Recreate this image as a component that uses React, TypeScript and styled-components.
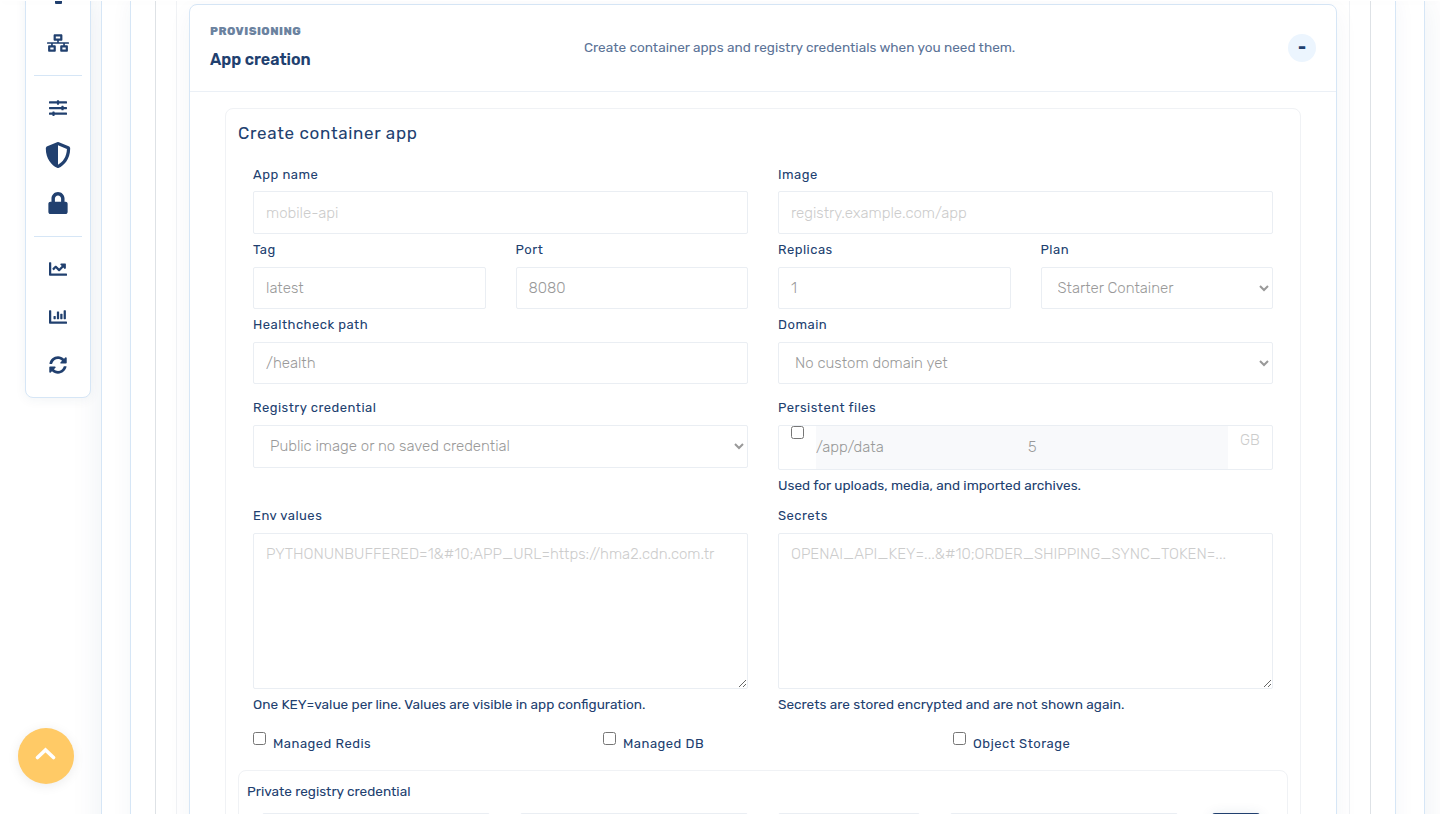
import React from 'react';
import styled, { createGlobalStyle } from 'styled-components';
import {
  FaNetworkWired,
  FaSlidersH,
  FaShieldAlt,
  FaLock,
  FaChartLine,
  FaChartBar,
  FaSyncAlt,
} from 'react-icons/fa';

const navy = '#21406f';

const GlobalStyle = createGlobalStyle`
  * { box-sizing: border-box; }
  body {
    margin: 0;
    overflow: hidden;
    background: #fff;
    color: ${navy};
    font-family: Rubik, Roboto, "Liberation Sans", sans-serif;
  }
  input, select, textarea, button { font-family: inherit; }
`;

const Page = styled.div`
  position: relative;
  height: 814px;
  overflow: hidden;
  padding: 0 15px 0 101px;
`;

const TopBar = styled.div`
  position: absolute;
  top: 0;
  left: 0;
  right: 0;
  height: 1px;
  background: #fff;
  box-shadow: 0 0 10px rgba(0, 0, 0, 0.07);
  z-index: 5;
`;

const Shell = styled.div<{ $line: string; $pad: number; $shadow?: string }>`
  display: flow-root;
  border: solid ${p => p.$line};
  border-width: 0 1px;
  padding: 0 ${p => p.$pad}px;
  background: #fff;
  box-shadow: ${p => p.$shadow || 'none'};
`;

const Rail = styled.nav`
  position: absolute;
  left: 25px;
  top: -10px;
  width: 66px;
  height: 408px;
  padding: 0 8px;
  border: 1px solid #d6e6f6;
  border-radius: 8px;
  background: #fff;
  box-shadow: 0 2px 12px rgba(31, 63, 110, 0.06);
  display: flex;
  flex-direction: column;
  align-items: center;
  color: ${navy};
  z-index: 2;
`;

const RailItem = styled.a<{ $lift?: number }>`
  display: flex;
  align-items: center;
  justify-content: center;
  width: 48px;
  height: 48px;
  padding-bottom: ${p => p.$lift || 0}px;
  flex: none;
`;

const RailStub = styled.span`
  width: 7px;
  height: 13px;
  flex: none;
  border-radius: 0 0 1px 1px;
  background: ${navy};
  margin-bottom: 15px;
`;

const RailLine = styled.div`
  width: 48px;
  height: 1px;
  flex: none;
  background: #d6e6f6;
  margin: 8px 0;
`;

const ToTop = styled.button`
  position: absolute;
  left: 18px;
  top: 728px;
  width: 56px;
  height: 56px;
  border: 0;
  padding: 0 0 5px;
  border-radius: 50%;
  background: #ffca66;
  box-shadow: 0 2px 12px rgba(0, 0, 0, 0.08);
  display: flex;
  align-items: center;
  justify-content: center;
  z-index: 3;
`;

const Card = styled.section`
  margin-top: 4px;
  height: 900px;
  border: 1px solid #d6e6f6;
  border-radius: 8px;
  background: #fff;
  box-shadow: 0 8px 24px rgba(31, 63, 110, 0.05);
`;

const CardHead = styled.header`
  display: grid;
  grid-template-columns: 374px 1fr 28px;
  align-items: center;
  height: 87px;
  padding: 0 20px;
  border-bottom: 1px solid #ebf0f6;
`;

const Heading = styled.div`
  display: flex;
  flex-direction: column;
  gap: 7px;
  height: 50px;
`;

const Eyebrow = styled.span`
  font-size: 11.52px;
  line-height: 16px;
  font-weight: 800;
  letter-spacing: 0.46px;
  color: #6b829f;
`;

const Title = styled.h2`
  margin: 0;
  font-size: 16px;
  line-height: 28px;
  font-weight: 600;
`;

const Lead = styled.span`
  font-size: 13.6px;
  line-height: 20px;
  padding-bottom: 2px;
  color: #5b7397;
`;

const Collapse = styled.button`
  width: 28px;
  height: 28px;
  border: 0;
  padding: 0 0 2px;
  border-radius: 50%;
  background: #ecf5fe;
  color: ${navy};
  font-size: 17px;
  font-weight: 800;
  line-height: 24px;
`;

const FormCard = styled.div`
  margin: 16px 35px 0;
  height: 900px;
  border: 1px solid #f0f2f5;
  border-radius: 8px;
  padding: 12px;
`;

const FormTitle = styled.h3`
  margin: 0 0 20px;
  font-size: 17px;
  line-height: 24px;
  font-weight: 400;
  letter-spacing: 0.68px;
`;

const Grid = styled.div`
  display: grid;
  grid-template-columns: repeat(4, 1fr);
  column-gap: 30px;
  padding: 0 15px;
`;

const Field = styled.div<{ $span?: number; $h: number }>`
  grid-column: span ${p => p.$span || 1};
  height: ${p => p.$h}px;
  display: flex;
  flex-direction: column;
  min-width: 0;
`;

const Label = styled.label<{ $h?: number }>`
  font-size: 13px;
  line-height: 20px;
  height: ${p => p.$h || 27}px;
  flex: none;
  letter-spacing: 0.5px;
`;

const Input = styled.input<{ $h?: number }>`
  width: 100%;
  height: ${p => p.$h || 42}px;
  flex: none;
  padding: 0 12px;
  border: 1px solid #eaeef3;
  border-radius: 2px;
  background: #fff;
  color: #999;
  font-size: 15px;
  font-weight: 300;
  &::placeholder { color: #ccc; opacity: 1; }
`;

const Select = styled.select<{ $h?: number }>`
  width: 100%;
  height: ${p => p.$h || 42}px;
  flex: none;
  padding: 0 12px ${p => (p.$h ? 1 : 0)}px;
  border: 1px solid #eaeef3;
  border-radius: 2px;
  background: #fff;
  color: #999;
  font-size: 15px;
  font-weight: 300;
`;

const Area = styled.textarea`
  width: 100%;
  height: 156px;
  flex: none;
  padding: 9px 12px;
  border: 1px solid #eaeef3;
  border-radius: 2px;
  background: #fff;
  font-size: 15px;
  line-height: 22px;
  font-weight: 300;
  &::placeholder { color: #ccc; opacity: 1; }
`;

const Help = styled.span`
  font-size: 13.6px;
  line-height: 20px;
  margin-top: 5px;
`;

const Volume = styled.div`
  display: flex;
  height: 45px;
  flex: none;
  padding: 0 12px;
  border: 1px solid #eaeef3;
  border-radius: 2px;
`;

const VolumeInput = styled.input<{ $w: number }>`
  width: ${p => p.$w}px;
  height: 43px;
  flex: none;
  border: 0;
  padding: 0 0 1px;
  background: #f8f9fb;
  color: #999;
  font-size: 15px;
  font-weight: 300;
`;

const Unit = styled.span`
  padding-left: 12px;
  color: #ccc;
  font-size: 15px;
  line-height: 28px;
  font-weight: 300;
`;

const Check = styled.input`
  width: 13px;
  height: 13px;
  flex: none;
  margin: 0;
`;

const VolumeCheck = styled(Check)`
  margin-right: 12px;
`;

const Options = styled.div`
  display: grid;
  grid-template-columns: repeat(3, 350px);
  padding: 0 0 0 15px;
  height: 38px;
`;

const Option = styled.label`
  display: flex;
  gap: 7px;
  font-size: 13px;
  letter-spacing: 0.5px;
  span { line-height: 20px; padding-top: 2px; }
`;

const Registry = styled.div`
  height: 200px;
  border: 1px solid #f0f2f5;
  border-radius: 8px;
  padding: 10px 8px;
`;

const RegistryTitle = styled.div`
  font-size: 13.6px;
  line-height: 20px;
`;

const RegistryRow = styled.div`
  display: grid;
  grid-template-columns: 228px 228px 142px 228px 52px;
  column-gap: 30px;
  padding: 12px 0 0 15px;
`;

const Save = styled.button`
  height: 42px;
  margin-left: 4px;
  border: 0;
  border-radius: 3px;
  background: ${navy};
  box-shadow: 0 2px 14px rgba(31, 63, 110, 0.12);
`;

export default function App() {
  return (
    <>
      <GlobalStyle />
      <Page>
        <TopBar />
        <Rail>
          <RailStub />
          <RailItem><FaNetworkWired size={22} /></RailItem>
          <RailLine />
          <RailItem><FaSlidersH size={18} /></RailItem>
          <RailItem $lift={2}><FaShieldAlt size={26} /></RailItem>
          <RailItem $lift={2}><FaLock size={22} /></RailItem>
          <RailLine />
          <RailItem><FaChartLine size={18} /></RailItem>
          <RailItem><FaChartBar size={18} /></RailItem>
          <RailItem><FaSyncAlt size={18} /></RailItem>
        </Rail>
        <ToTop aria-label="Back to top">
          <svg width="22" height="14" viewBox="0 0 22 14" fill="none">
            <path d="M2.5 10.5 10.5 3l8 7.5" stroke="#fff" strokeWidth="3.6" strokeLinecap="round" />
          </svg>
        </ToTop>
        <Shell $line="#d6e6f6" $pad={28} $shadow="0 0 30px rgba(31, 63, 110, 0.08)">
          <Shell $line="#d6e6f6" $pad={24} $shadow="0 0 20px rgba(31, 63, 110, 0.05)">
            <Shell $line="#dee2e6" $pad={20}>
              <Shell $line="#f0f2f5" $pad={12}>
                <Card>
                  <CardHead>
                    <Heading>
                      <Eyebrow>PROVISIONING</Eyebrow>
                      <Title>App creation</Title>
                    </Heading>
                    <Lead>Create container apps and registry credentials when you need them.</Lead>
                    <Collapse>-</Collapse>
                  </CardHead>
                  <FormCard>
                    <FormTitle>Create container app</FormTitle>
                    <Grid>
                      <Field $span={2} $h={75}>
                        <Label $h={26}>App name</Label>
                        <Input $h={43} placeholder="mobile-api" />
                      </Field>
                      <Field $span={2} $h={75}>
                        <Label $h={26}>Image</Label>
                        <Input $h={43} placeholder="registry.example.com/app" />
                      </Field>
                      <Field $h={75}>
                        <Label>Tag</Label>
                        <Input defaultValue="latest" />
                      </Field>
                      <Field $h={75}>
                        <Label>Port</Label>
                        <Input defaultValue="8080" />
                      </Field>
                      <Field $h={75}>
                        <Label>Replicas</Label>
                        <Input defaultValue="1" />
                      </Field>
                      <Field $h={75}>
                        <Label>Plan</Label>
                        <Select><option>Starter Container</option></Select>
                      </Field>
                      <Field $span={2} $h={83}>
                        <Label>Healthcheck path</Label>
                        <Input defaultValue="/health" />
                      </Field>
                      <Field $span={2} $h={83}>
                        <Label>Domain</Label>
                        <Select><option>No custom domain yet</option></Select>
                      </Field>
                      <Field $span={2} $h={108}>
                        <Label>Registry credential</Label>
                        <Select $h={43}><option>Public image or no saved credential</option></Select>
                      </Field>
                      <Field $span={2} $h={108}>
                        <Label>Persistent files</Label>
                        <Volume>
                          <VolumeCheck type="checkbox" />
                          <VolumeInput $w={212} defaultValue="/app/data" />
                          <VolumeInput $w={200} defaultValue="5" />
                          <Unit>GB</Unit>
                        </Volume>
                        <Help>Used for uploads, media, and imported archives.</Help>
                      </Field>
                      <Field $span={2} $h={226}>
                        <Label>Env values</Label>
                        <Area placeholder="PYTHONUNBUFFERED=1&amp;#10;APP_URL=https://hma2.cdn.com.tr" />
                        <Help>One KEY=value per line. Values are visible in app configuration.</Help>
                      </Field>
                      <Field $span={2} $h={226}>
                        <Label>Secrets</Label>
                        <Area placeholder="OPENAI_API_KEY=...&amp;#10;ORDER_SHIPPING_SYNC_TOKEN=..." />
                        <Help>Secrets are stored encrypted and are not shown again.</Help>
                      </Field>
                    </Grid>
                    <Options>
                      <Option><Check type="checkbox" /><span>Managed Redis</span></Option>
                      <Option><Check type="checkbox" /><span>Managed DB</span></Option>
                      <Option><Check type="checkbox" /><span>Object Storage</span></Option>
                    </Options>
                    <Registry>
                      <RegistryTitle>Private registry credential</RegistryTitle>
                      <RegistryRow>
                        <Input />
                        <Input />
                        <Input />
                        <Input />
                        <Save />
                      </RegistryRow>
                    </Registry>
                  </FormCard>
                </Card>
              </Shell>
            </Shell>
          </Shell>
        </Shell>
      </Page>
    </>
  );
}
